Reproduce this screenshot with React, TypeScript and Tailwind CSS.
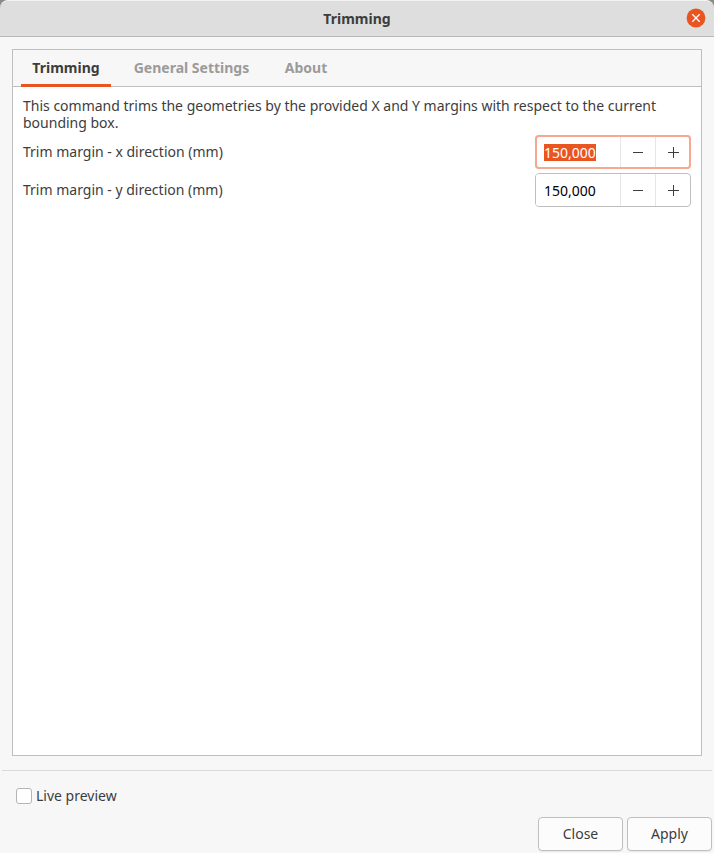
import { useEffect, useRef, useState } from "react";
import clsx from "clsx";

const tabs = ["Trimming", "General Settings", "About"];

function TitleBar() {
  return (
    <header className="bg-[#8b8985]">
      <div className="grid h-[37px] grid-cols-[1fr_auto_1fr] items-center rounded-t-lg border-t border-b border-t-[#f3f3f3] border-b-[#b8b8b8] bg-[#dedede] px-2 pb-px">
        <h1 className="col-start-2 pt-px text-sm font-bold">Trimming</h1>
        <button
          type="button"
          aria-label="Close window"
          className="flex size-5 items-center justify-center justify-self-end rounded-full"
        >
          <svg viewBox="0 0 20 20" className="size-5">
            <circle cx="10" cy="10" r="9.4" fill="#e95420" />
            <path d="M6.3 6.3 L13.7 13.7 M13.7 6.3 L6.3 13.7" stroke="#fff" strokeWidth="1.3" />
          </svg>
        </button>
      </div>
    </header>
  );
}

function SpinField({ id, label, selected = false }: { id: string; label: string; selected?: boolean }) {
  const input = useRef<HTMLInputElement>(null);
  const [value, setValue] = useState("150,000");

  useEffect(() => {
    if (selected) {
      input.current?.focus();
      input.current?.select();
    }
  }, [selected]);

  const step = (delta: number) => {
    const n = parseFloat(value.replace(",", ".")) || 0;
    setValue((n + delta).toFixed(3).replace(".", ","));
  };

  return (
    <div className="flex items-center justify-between">
      <label htmlFor={id}>{label}</label>
      <div className="flex h-[34px] w-[156px] overflow-hidden rounded border border-[#c0bfbd] bg-white focus-within:outline-2 focus-within:-outline-offset-2 focus-within:border-[#f4aa90] focus-within:outline-[#f4aa90]">
        <input
          ref={input}
          id={id}
          value={value}
          onChange={(e) => setValue(e.target.value)}
          className="min-w-0 flex-1 bg-white pl-2 leading-[17px] text-black outline-none selection:bg-[#e95420] selection:text-white"
        />
        <button
          type="button"
          aria-label={`Decrease ${label}`}
          onClick={() => step(-1)}
          className="flex w-[35px] items-center justify-center border-l border-[#e6e6e6]"
        >
          <svg viewBox="0 0 12 12" className="size-3">
            <path d="M1 6.5 H11" stroke="#3d3d3d" />
          </svg>
        </button>
        <button
          type="button"
          aria-label={`Increase ${label}`}
          onClick={() => step(1)}
          className="flex w-[35px] items-center justify-center border-l border-[#e6e6e6]"
        >
          <svg viewBox="0 0 12 12" className="size-3">
            <path d="M1 6.5 H12 M6.5 1 V12" stroke="#3d3d3d" />
          </svg>
        </button>
      </div>
    </div>
  );
}

export default function App() {
  const [active, setActive] = useState("Trimming");

  return (
    <div className="flex min-h-screen flex-col bg-[#f7f7f7] font-['Noto_Sans',sans-serif] text-sm text-[#3d3d3d]">
      <TitleBar />

      <main className="mx-3 mt-3 mb-[14px] flex flex-1 flex-col border border-[#c0bfbd] bg-white">
        <div
          role="tablist"
          className="grid h-[37px] grid-cols-[90px_145px_68px] gap-2 border-b border-[#c0bfbd] bg-[#f7f7f7] px-2"
        >
          {tabs.map((tab) => (
            <button
              key={tab}
              type="button"
              role="tab"
              aria-selected={tab === active}
              onClick={() => setActive(tab)}
              className={clsx(
                "-mb-px border-b-3 pt-[2px] text-center font-bold whitespace-nowrap",
                tab === active ? "border-[#e95420]" : "border-transparent text-[#9b9b9b]"
              )}
            >
              {tab}
            </button>
          ))}
        </div>

        <div role="tabpanel" className="flex flex-col gap-1 px-[10px] pt-[10px]">
          <p className="leading-[17px]">
            This command trims the geometries by the provided X and Y margins with respect to the current bounding box.
          </p>
          <SpinField id="trim-x" label="Trim margin - x direction (mm)" selected />
          <SpinField id="trim-y" label="Trim margin - y direction (mm)" />
        </div>
      </main>

      <footer className="mx-[2px] mb-[2px] border-t border-[#dadada] pt-[15px]">
        <label className="flex w-fit items-center gap-1 pl-[14px]">
          <input
            type="checkbox"
            className="size-4 appearance-none rounded-[3px] border border-[#b6b5b3] bg-white checked:bg-[#e95420]"
          />
          Live preview
        </label>
        <div className="mt-[11px] flex justify-end gap-1">
          {["Close", "Apply"].map((name) => (
            <button
              key={name}
              type="button"
              className="h-[34px] w-[85px] rounded border border-[#c0bfbd] bg-[#fcfcfc] shadow-[0_1px_1px_rgba(0,0,0,0.06)]"
            >
              {name}
            </button>
          ))}
        </div>
      </footer>
    </div>
  );
}
